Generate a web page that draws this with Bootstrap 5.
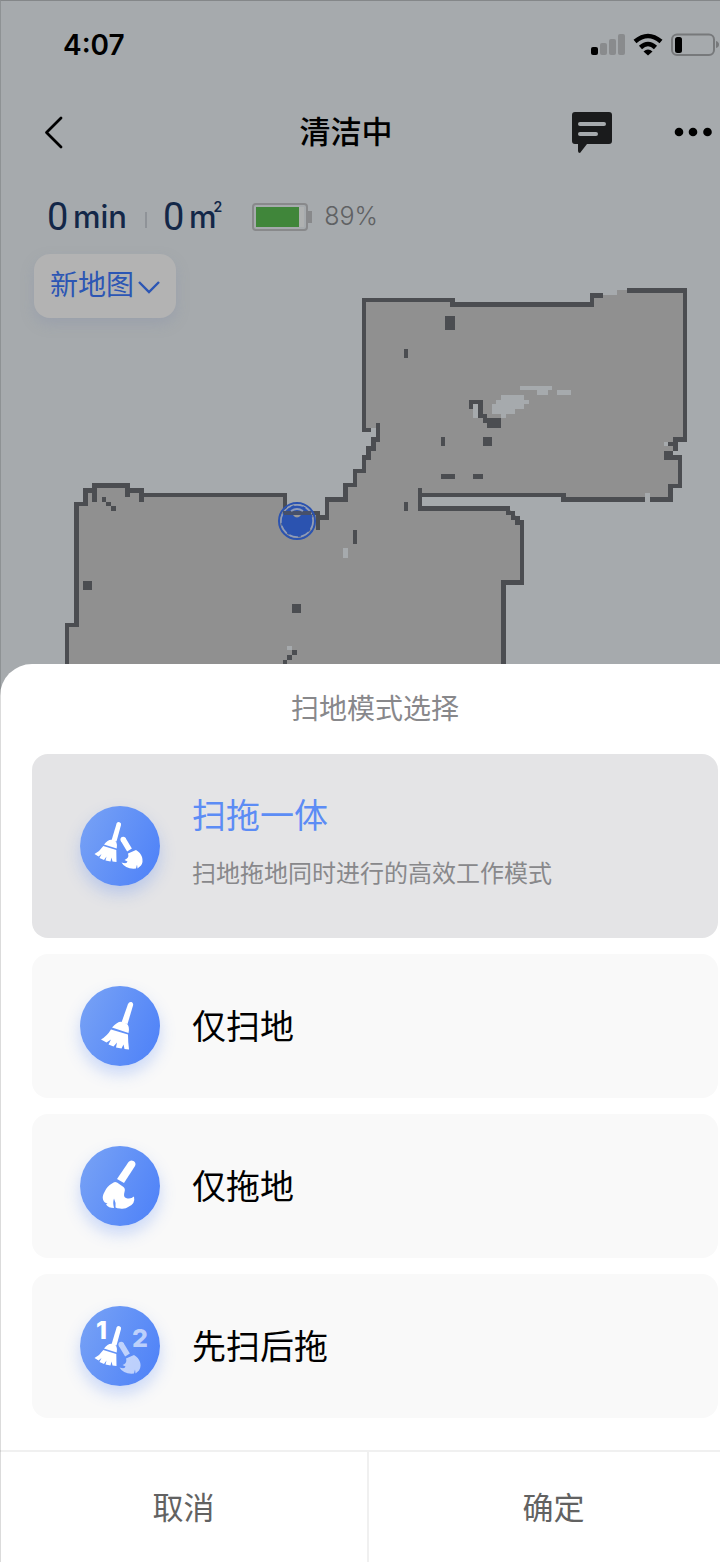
<!DOCTYPE html>
<html lang="zh-CN">
<head>
<meta charset="utf-8">
<meta name="viewport" content="width=device-width, initial-scale=1">
<title>清洁中</title>
<link href="https://cdn.jsdelivr.net/npm/bootstrap@5.3.0/dist/css/bootstrap.min.css" rel="stylesheet">
<style>
  :root { --scene: #a6aaad; --navy: #132748; --accent: #2c56b4; }
  body { font-family: Inter, "Noto Sans CJK SC", sans-serif; background: #fff; color: #000; }
  svg { display: block; }
  .screen::before { content: ""; position: absolute; inset: 0; z-index: 5; pointer-events: none;
    border-left: 1px solid rgba(0,0,0,.14); border-top: 1px solid rgba(0,0,0,.2); }
  .scene { background: var(--scene); }
  .status-bar { height: 90px; padding-left: 63px; }
  .clock { font-size: 28px; font-weight: 600; line-height: 40px; }
  .title-bar { height: 84px; padding-left: 44px; padding-right: 8px; }
  .title-bar h1 { font-size: 31px; line-height: 44px; font-weight: 500; }
  .plain { border: 0; background: none; padding: 0; color: inherit; }
  .back { width: 76px; }
  .stats { height: 54px; margin-top: 16px; padding-left: 47px; color: var(--navy); }
  .figure-num { font: 400 38px/54px Roboto, sans-serif; width: 26px; }
  .unit { font-size: 31px; line-height: 54px; font-weight: 500; }
  .unit-exp { font-size: 14px; line-height: 16px; font-weight: 600; align-self: flex-start; margin-top: 9px; margin-left: -3px; }
  .rule { width: 2px; height: 16px; background: #8f9398; margin: 6px 16px 0 18px; }
  .battery { margin-left: 30px; }
  .percent { font-size: 25px; font-weight: 300; color: #5f6163; margin-left: 12px; }
  .map-pick { top: 10px; left: 34px; height: 64px; padding: 0 16px 2px 16px; border-radius: 16px; font-size: 28px;
    background: #b3b3b3; color: var(--accent); box-shadow: 0 6px 14px rgba(130,140,170,.3); }
  .sheet { background: #fff; border-radius: 32px 0 0 0; margin-top: -32px; }
  .sheet h2 { font-size: 28px; line-height: 42px; font-weight: 400; color: #88888b; padding: 24px 0 24px 30px; }
  .modes { padding: 0 2px 32px 32px; gap: 16px; }
  .mode { min-height: 144px; padding: 32px 48px; gap: 32px; border-radius: 16px; background: #f9f9f9; cursor: pointer; }
  .mode-name { font-size: 34px; line-height: 48px; font-weight: 400; padding-top: 2px; }
  .mode-note { display: none; font-size: 24px; line-height: 36px; font-weight: 400; color: #88888b; margin: 16px 0 8px; }
  .btn-check:checked + .mode { min-height: 184px; background: #e4e4e6; }
  .btn-check:checked + .mode .mode-name { color: #5c8cf5; padding: 0; }
  .btn-check:checked + .mode .mode-note { display: block; }
  .disc { flex: none; width: 80px; height: 80px; border-radius: 50%; background: linear-gradient(115deg, #79a3f5, #4c80f8);
    box-shadow: 0 8px 16px rgba(80,130,245,.28); }
  .actions { display: grid; grid-template-columns: 41fr 39fr; border-top: 2px solid #f0f0f0; }
  .actions button { height: 110px; padding-top: 2px; font-size: 31px; font-weight: 400; color: #626262; }
  .actions .cancel { border-right: 2px solid #f0f0f0; }
  .actions .confirm { padding-left: 18px; }
</style>
</head>
<body>
<svg width="0" height="0" class="position-absolute" aria-hidden="true">
  <defs>
    <g id="broom">
      <path d="M36.600 17.500Q37.500 15.800 39.500 16.200Q41.500 17 41 19L36.500 35.500 31.500 34.500Z" fill="currentColor"/>
      <path d="M24 38.500Q28.500 32.500 33 34Q38 34.500 36.700 42.500Z" fill="currentColor"/>
      <path d="M23.300 40 36.300 44 36.500 56 32.500 55.500 31.500 51.500 30.500 55.500 25.500 54.500 26.500 50.500 24 54 19.500 52 21.500 48 18.500 50.500 14.500 48Q20 45 23.300 40Z" fill="currentColor"/>
    </g>
    <g id="mop">
      <path d="M43.200 33.500 49.500 44" stroke="currentColor" stroke-width="5.500"/>
      <circle cx="43.200" cy="33.500" r="2.750" fill="currentColor"/>
      <path d="M48 47.500 56 44Q60.500 46.500 62 51Q63.500 56 61 59.500L57.500 62.500 57 58.500 56 62.500Q45.500 63.500 41.500 56.500Q47 58.500 47.500 55.500L44.500 54Q49.500 52 48 47.500Z" fill="currentColor"/>
    </g>
  </defs>
</svg>

<main class="screen position-relative">
  <section class="scene">
    <div class="status-bar d-flex align-items-center justify-content-between">
      <span class="clock">4:07</span>
      <svg width="130" height="26" viewBox="590 32 130 26" role="img" aria-label="信号、无线网络、电量">
        <rect x="591" y="47" width="7" height="8" rx="2"/>
        <g fill="#898b8d"><rect x="600" y="43" width="7" height="12" rx="2"/><rect x="609" y="39" width="7" height="16" rx="2"/><rect x="618" y="34" width="7" height="21" rx="2"/></g>
        <g fill="none" stroke="#000" stroke-width="4.500"><path d="M635 41.500Q648 30.500 661 41.500"/><path d="M640.500 47.500Q648 40.500 655.500 47.500"/></g>
        <path d="M643.500 51.500Q648 47.500 652.500 51.500L648 55.500Z"/>
        <rect x="672" y="34.500" width="42" height="20.500" rx="5" fill="none" stroke="#77797b" stroke-width="2"/>
        <rect x="675" y="37" width="7" height="16" rx="2.500"/>
        <path d="M716 41q3 1 3 3.500t-3 3.500Z" fill="#77797b"/>
      </svg>
    </div>

    <header class="title-bar d-flex align-items-center">
      <button type="button" class="plain back" aria-label="返回">
        <svg width="20" height="34" viewBox="0 0 20 34"><path d="M17 3 2.500 17.500 17 32" fill="none" stroke="#000" stroke-width="2.800" stroke-linecap="round" stroke-linejoin="round"/></svg>
      </button>
      <h1 class="flex-fill text-center mb-0">清洁中</h1>
      <button type="button" class="plain pt-1" aria-label="消息">
        <svg width="40" height="44" viewBox="0 1 40 44"><path d="M3 1H37Q40 1 40 4V30Q40 33 37 33H15L8 42Q6 42 6 40V33H3Q0 33 0 30V4Q0 1 3 1Z" fill="#1a1b1c"/><path d="M8 13H32M8 23H24" stroke="#a6aaad" stroke-width="4" stroke-linecap="round"/></svg>
      </button>
      <button type="button" class="plain ps-5" aria-label="更多">
        <svg width="52" height="10" viewBox="-14 0 52 10"><circle cx="5" cy="5" r="4.300"/><circle cx="19" cy="5" r="4.300"/><circle cx="33.500" cy="5" r="4.300"/></svg>
      </button>
    </header>

    <div class="stats d-flex align-items-center">
      <span class="figure-num">0</span><span class="unit">min</span>
      <span class="rule"></span>
      <span class="figure-num">0</span><span class="unit">m</span><span class="unit-exp">2</span>
      <svg class="battery" width="60" height="28" viewBox="0 0 60 28" aria-hidden="true">
        <rect x="1" y="1" width="54" height="26" rx="3" fill="none" stroke="#88898b" stroke-width="2"/>
        <path d="M4 4H47V24H4Z" fill="#40863a"/><path d="M47 4H52V24H47Z" fill="#afb1b1"/><path d="M56 8H60V20H56Z" fill="#88898b"/>
      </svg>
      <span class="percent">89%</span>
    </div>

    <div class="position-relative">
      <svg class="w-100" viewBox="0 244 720 452" shape-rendering="crispEdges" role="img" aria-label="清洁地图">
        <path fill="#909090" d="M364 300H452V304H592V295H617V290H685V441H675V457H680V486H670V499H420V508H508L522 522V583H503V696H67V625H76V504H85V490H94V485H128V490H141V495H285V513H318V517H327V499H345V485H355V471H364V457H369V446H374V439H378V430H364Z"/>
        <path fill="#a6aaad" d="M422 497H561V501H645V506H422ZM371 428H376V437H371ZM673 451H687V455H673ZM664 442H668V446H664ZM645 493H650V502H645ZM603 288H617V293H603ZM520 386H552V390H548V395H537V390H520ZM557 390H571V395H557ZM501 395H524V400H529V404H524V409H515V414H506V418H501V414H492V404H496V400H501ZM343 548H348V558H343ZM287 646H292V650H287Z"/>
        <g fill="none" stroke="#4b4d51" stroke-width="4.500">
          <path d="M371 430H364V300H452.500V304.500H592V295.500H603M627 290.500H685V439.500H675.500V451M682 457.500H664M680 456V486H670.500V499.500H650M645 499.500H563.500V495H418M420 488V508.500H508V513H513V518H517.500V522.500H522V582.500H503.500V696"/>
          <path d="M378 423V439.500H373.500V448.500H368.500V457.500H364V471H355V485H345.500V499.500H327V517.500H318M318 530V513H285V495H141.500V502M141.500 495V490.500H127.500V497M127.500 490V485.500H94.500V502M94.500 490.500H85.500V504H76.500V625H67V696"/>
        </g>
        <path fill="#4b4d51" d="M668 442H678V446H668ZM664 451H673V460H664ZM102 497H106V502H102ZM106 502H111V506H106ZM111 506H116V511H111ZM83 581H92V590H83ZM292 604H301V613H292ZM292 650H297V655H292ZM287 655H292V660H287ZM283 660H287V664H283ZM353 530H357V544H353ZM404 502H408V511H404ZM441 437H445V446H441ZM483 437H492V446H483ZM441 474H455V479H441ZM473 474H483V479H473ZM445 316H455V330H445ZM404 349H408V358H404ZM469 400H483V414H487V418H501V428H487V423H483V418H478V404H473V409H469Z"/>
        <path fill="#a6aaad" d="M473 404H478V418H473Z"/>
        <g shape-rendering="auto">
          <circle cx="297" cy="521" r="18" fill="none" stroke="#2b53b0" stroke-width="2"/>
          <circle cx="297" cy="521" r="16" fill="#2b53b0" stroke="#8f9cba" stroke-width="1.500" stroke-dasharray="9 3"/>
          <path d="M284 511H311V515H284Z" fill="#46506b"/>
          <path d="M291 511Q297 507 303 511" fill="none" stroke="#8f9cba" stroke-width="2"/>
          <path d="M293 515H301Q297 520 293 515Z" fill="#999"/>
        </g>
      </svg>
      <button type="button" class="plain map-pick position-absolute d-flex align-items-center" aria-haspopup="true">新地图
        <svg class="ms-1 mt-1" width="22" height="14" viewBox="0 0 22 14"><path d="M1 2 11 12 21 2" fill="none" stroke="#2c56b4" stroke-width="2.400"/></svg>
      </button>
    </div>
  </section>

  <form class="sheet position-relative">
    <h2 class="text-center mb-0">扫地模式选择</h2>
    <div class="modes d-flex flex-column">
      <div>
        <input class="btn-check" type="radio" name="mode" id="mode-both" checked>
        <label class="mode d-flex align-items-center" for="mode-both">
          <svg class="disc text-white" viewBox="0 0 80 80" fill="none"><use href="#broom"/><use href="#mop"/></svg>
          <span><span class="mode-name d-block">扫拖一体</span><span class="mode-note">扫地拖地同时进行的高效工作模式</span></span>
        </label>
      </div>
      <div>
        <input class="btn-check" type="radio" name="mode" id="mode-sweep">
        <label class="mode d-flex align-items-center" for="mode-sweep">
          <svg class="disc" viewBox="0 0 80 80" fill="#fff">
            <path d="M48 18Q49 15.500 51.500 16Q53.700 17 53 19.500L47.500 38 41.500 36.500Z"/>
            <path d="M32 41.500Q38 35 42 36L46.500 37.500Q50 40 48.500 47Z"/>
            <path d="M31 43.500 48 48.500Q48 56 49 63.500L44.500 63 43.500 58.500 41.500 62.500 36 61.500 37 56.500 33.500 60.500 28.500 58.500 31 53.500 26.500 56.500 21 53.500Q27 50 31 43.500Z"/>
          </svg>
          <span><span class="mode-name d-block">仅扫地</span></span>
        </label>
      </div>
      <div>
        <input class="btn-check" type="radio" name="mode" id="mode-mop">
        <label class="mode d-flex align-items-center" for="mode-mop">
          <svg class="disc" viewBox="0 0 80 80" fill="#fff">
            <path d="M48.500 16Q50.500 13.500 53.500 15Q56.500 17 55 20L44 37 37 33Z"/>
            <path d="M32 37.500Q34.500 35 37 36.500L43.500 41Q45.500 42.500 44.500 46Q43 51 46 52Q50.500 53.500 54 50.500Q55.500 57.500 49 60.500Q45 63.500 40 62.500Q37 62.500 35.500 61.500Q36 56 34 52.500Q32.500 56 34 62Q28.500 62 26 58.500L27.500 57.500Q24 57 23 53.500Q22 50 24.500 46Q27 40 32 37.500Z"/>
          </svg>
          <span><span class="mode-name d-block">仅拖地</span></span>
        </label>
      </div>
      <div>
        <input class="btn-check" type="radio" name="mode" id="mode-sequence">
        <label class="mode d-flex align-items-center" for="mode-sequence">
          <svg class="disc text-white" viewBox="0 0 80 80" fill="none" font-family="Inter, sans-serif" font-weight="800" font-size="25">
            <text x="16" y="33" fill="#fff">1</text>
            <text x="52" y="41" fill="#fff" fill-opacity=".6">2</text>
            <use href="#broom" y="4"/><use href="#mop" x="-2" y="5" opacity=".6"/>
          </svg>
          <span><span class="mode-name d-block">先扫后拖</span></span>
        </label>
      </div>
    </div>
    <div class="actions">
      <button type="button" class="plain cancel">取消</button>
      <button type="submit" class="plain confirm">确定</button>
    </div>
  </form>
</main>
<script src="https://cdn.jsdelivr.net/npm/bootstrap@5.3.0/dist/js/bootstrap.bundle.min.js"></script>
</body>
</html>
